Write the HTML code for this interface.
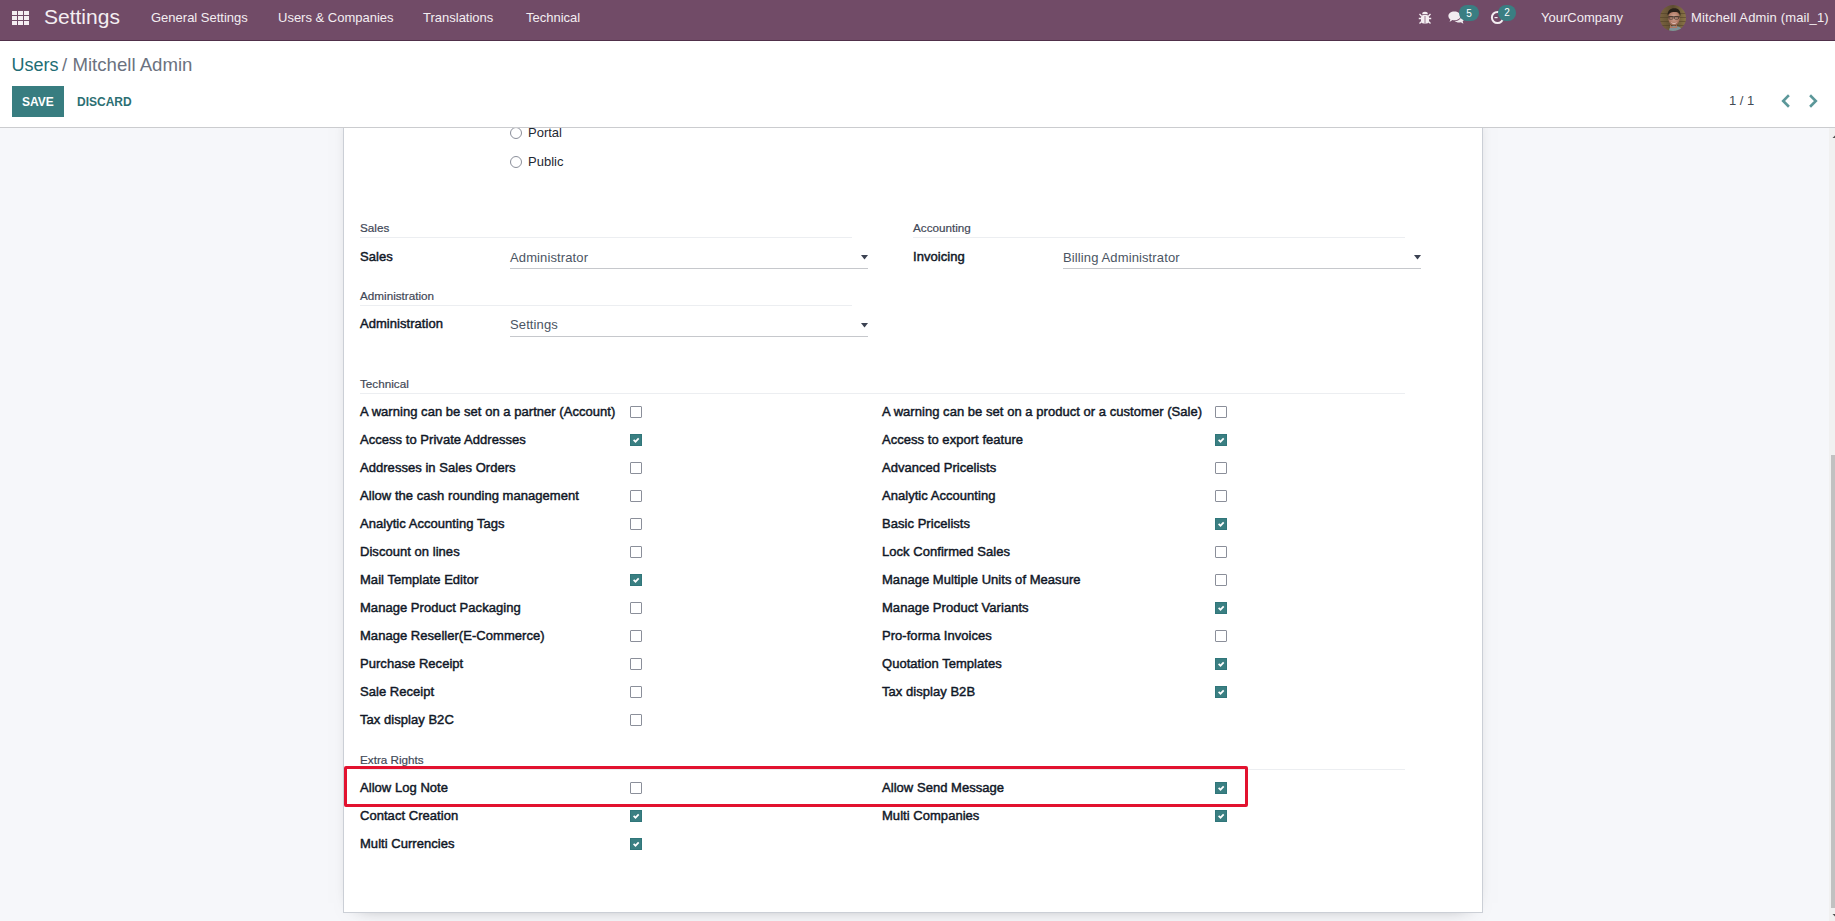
<!DOCTYPE html>
<html><head><meta charset="utf-8">
<style>
*{margin:0;padding:0;box-sizing:border-box}
html,body{width:1835px;height:921px;overflow:hidden;background:#f6f7fa;font-family:"Liberation Sans",sans-serif}
.a{position:absolute;white-space:nowrap}
#nav{position:absolute;left:0;top:0;width:1835px;height:41px;background:#714b67;border-bottom:1px solid #50304a;z-index:5}
.nt{position:absolute;color:#f4eef2;font-size:13px;line-height:16px;top:10px}
#cp{position:absolute;left:0;top:41px;width:1835px;height:87px;background:#fff;border-bottom:1px solid #cbcccf;z-index:4}
#sheet{position:absolute;left:343px;top:100px;width:1140px;height:813px;background:#fff;border:1px solid #cbcfd6;box-shadow:0 5px 20px -15px rgba(0,0,0,.6)}
.lbl{font-size:13px;font-weight:normal;color:#111827;letter-spacing:0.04px;line-height:16px;-webkit-text-stroke:0.45px #111827}
.hd{font-size:11.7px;color:#3f4857;line-height:14px;-webkit-text-stroke:0.2px #3f4857}
.sep{position:absolute;height:1px;background:#eceef1}
.cb{position:absolute;width:12px;height:12px;border:1px solid #8b8f9a;border-radius:1px;background:#fff}
.cb.on{background:#3a7f82;border-color:#30767a;border-radius:0}
.sel{position:absolute;height:1px;background:#c6c8cc}
.st{font-size:13px;color:#4b5563;line-height:16px;letter-spacing:0.12px}
.caret{position:absolute}
.rad{position:absolute;width:12px;height:12px;border:1px solid #8b8f9a;border-radius:50%;background:#fff}
.txt{font-size:13px;color:#1f2933;line-height:16px}
#sbt{position:absolute;left:1829px;top:128px;width:6px;height:793px;background:#f1f1f1}
#sbth{position:absolute;left:1831px;top:455px;width:4px;height:453px;background:#c1c1c1}
.badge{position:absolute;height:16px;background:#3a7e82;border-radius:8px;color:#fff;font-size:10px;line-height:16px;text-align:center}
</style></head><body>
<div id="sheet"></div>
<div class="rad" style="left:510px;top:127px"></div>
<div class="a txt" style="left:528px;top:125px">Portal</div>
<div class="rad" style="left:510px;top:156px"></div>
<div class="a txt" style="left:528px;top:154px">Public</div>

<div class="a hd" style="left:360px;top:221px">Sales</div>
<div class="sep" style="left:360px;top:237px;width:492px"></div>
<div class="a lbl" style="left:360px;top:249px">Sales</div>
<div class="a st" style="left:510px;top:250px">Administrator</div>
<div class="sel" style="left:510px;top:268px;width:358px"></div>
<svg class="caret" style="left:861px;top:255px" width="7" height="5"><path d="M0 0 L7 0 L3.5 4.5 Z" fill="#3b4252"/></svg>

<div class="a hd" style="left:913px;top:221px">Accounting</div>
<div class="sep" style="left:913px;top:237px;width:492px"></div>
<div class="a lbl" style="left:913px;top:249px">Invoicing</div>
<div class="a st" style="left:1063px;top:250px">Billing Administrator</div>
<div class="sel" style="left:1063px;top:268px;width:358px"></div>
<svg class="caret" style="left:1414px;top:255px" width="7" height="5"><path d="M0 0 L7 0 L3.5 4.5 Z" fill="#3b4252"/></svg>

<div class="a hd" style="left:360px;top:289px">Administration</div>
<div class="sep" style="left:360px;top:305px;width:492px"></div>
<div class="a lbl" style="left:360px;top:316px">Administration</div>
<div class="a st" style="left:510px;top:317px">Settings</div>
<div class="sel" style="left:510px;top:336px;width:358px"></div>
<svg class="caret" style="left:861px;top:323px" width="7" height="5"><path d="M0 0 L7 0 L3.5 4.5 Z" fill="#3b4252"/></svg>

<div class="a hd" style="left:360px;top:377px">Technical</div>
<div class="sep" style="left:360px;top:393px;width:1045px"></div>

<div class="a hd" style="left:360px;top:753px">Extra Rights</div>
<div class="sep" style="left:360px;top:769px;width:1045px"></div>
<div class="a lbl" style="left:360px;top:404px">A warning can be set on a partner (Account)</div>
<div class="cb" style="left:630px;top:406px"></div>
<div class="a lbl" style="left:360px;top:432px">Access to Private Addresses</div>
<div class="cb on" style="left:630px;top:434px"><svg width="12" height="12" style="position:absolute;left:-1px;top:-1px"><path d="M3.6 5.9 L5.5 7.7 L8.7 4.3" stroke="#fff" stroke-width="1.7" fill="none"/></svg></div>
<div class="a lbl" style="left:360px;top:460px">Addresses in Sales Orders</div>
<div class="cb" style="left:630px;top:462px"></div>
<div class="a lbl" style="left:360px;top:488px">Allow the cash rounding management</div>
<div class="cb" style="left:630px;top:490px"></div>
<div class="a lbl" style="left:360px;top:516px">Analytic Accounting Tags</div>
<div class="cb" style="left:630px;top:518px"></div>
<div class="a lbl" style="left:360px;top:544px">Discount on lines</div>
<div class="cb" style="left:630px;top:546px"></div>
<div class="a lbl" style="left:360px;top:572px">Mail Template Editor</div>
<div class="cb on" style="left:630px;top:574px"><svg width="12" height="12" style="position:absolute;left:-1px;top:-1px"><path d="M3.6 5.9 L5.5 7.7 L8.7 4.3" stroke="#fff" stroke-width="1.7" fill="none"/></svg></div>
<div class="a lbl" style="left:360px;top:600px">Manage Product Packaging</div>
<div class="cb" style="left:630px;top:602px"></div>
<div class="a lbl" style="left:360px;top:628px">Manage Reseller(E-Commerce)</div>
<div class="cb" style="left:630px;top:630px"></div>
<div class="a lbl" style="left:360px;top:656px">Purchase Receipt</div>
<div class="cb" style="left:630px;top:658px"></div>
<div class="a lbl" style="left:360px;top:684px">Sale Receipt</div>
<div class="cb" style="left:630px;top:686px"></div>
<div class="a lbl" style="left:360px;top:712px">Tax display B2C</div>
<div class="cb" style="left:630px;top:714px"></div>
<div class="a lbl" style="left:882px;top:404px">A warning can be set on a product or a customer (Sale)</div>
<div class="cb" style="left:1215px;top:406px"></div>
<div class="a lbl" style="left:882px;top:432px">Access to export feature</div>
<div class="cb on" style="left:1215px;top:434px"><svg width="12" height="12" style="position:absolute;left:-1px;top:-1px"><path d="M3.6 5.9 L5.5 7.7 L8.7 4.3" stroke="#fff" stroke-width="1.7" fill="none"/></svg></div>
<div class="a lbl" style="left:882px;top:460px">Advanced Pricelists</div>
<div class="cb" style="left:1215px;top:462px"></div>
<div class="a lbl" style="left:882px;top:488px">Analytic Accounting</div>
<div class="cb" style="left:1215px;top:490px"></div>
<div class="a lbl" style="left:882px;top:516px">Basic Pricelists</div>
<div class="cb on" style="left:1215px;top:518px"><svg width="12" height="12" style="position:absolute;left:-1px;top:-1px"><path d="M3.6 5.9 L5.5 7.7 L8.7 4.3" stroke="#fff" stroke-width="1.7" fill="none"/></svg></div>
<div class="a lbl" style="left:882px;top:544px">Lock Confirmed Sales</div>
<div class="cb" style="left:1215px;top:546px"></div>
<div class="a lbl" style="left:882px;top:572px">Manage Multiple Units of Measure</div>
<div class="cb" style="left:1215px;top:574px"></div>
<div class="a lbl" style="left:882px;top:600px">Manage Product Variants</div>
<div class="cb on" style="left:1215px;top:602px"><svg width="12" height="12" style="position:absolute;left:-1px;top:-1px"><path d="M3.6 5.9 L5.5 7.7 L8.7 4.3" stroke="#fff" stroke-width="1.7" fill="none"/></svg></div>
<div class="a lbl" style="left:882px;top:628px">Pro-forma Invoices</div>
<div class="cb" style="left:1215px;top:630px"></div>
<div class="a lbl" style="left:882px;top:656px">Quotation Templates</div>
<div class="cb on" style="left:1215px;top:658px"><svg width="12" height="12" style="position:absolute;left:-1px;top:-1px"><path d="M3.6 5.9 L5.5 7.7 L8.7 4.3" stroke="#fff" stroke-width="1.7" fill="none"/></svg></div>
<div class="a lbl" style="left:882px;top:684px">Tax display B2B</div>
<div class="cb on" style="left:1215px;top:686px"><svg width="12" height="12" style="position:absolute;left:-1px;top:-1px"><path d="M3.6 5.9 L5.5 7.7 L8.7 4.3" stroke="#fff" stroke-width="1.7" fill="none"/></svg></div>
<div class="a lbl" style="left:360px;top:780px">Allow Log Note</div>
<div class="cb" style="left:630px;top:782px"></div>
<div class="a lbl" style="left:360px;top:808px">Contact Creation</div>
<div class="cb on" style="left:630px;top:810px"><svg width="12" height="12" style="position:absolute;left:-1px;top:-1px"><path d="M3.6 5.9 L5.5 7.7 L8.7 4.3" stroke="#fff" stroke-width="1.7" fill="none"/></svg></div>
<div class="a lbl" style="left:360px;top:836px">Multi Currencies</div>
<div class="cb on" style="left:630px;top:838px"><svg width="12" height="12" style="position:absolute;left:-1px;top:-1px"><path d="M3.6 5.9 L5.5 7.7 L8.7 4.3" stroke="#fff" stroke-width="1.7" fill="none"/></svg></div>
<div class="a lbl" style="left:882px;top:780px">Allow Send Message</div>
<div class="cb on" style="left:1215px;top:782px"><svg width="12" height="12" style="position:absolute;left:-1px;top:-1px"><path d="M3.6 5.9 L5.5 7.7 L8.7 4.3" stroke="#fff" stroke-width="1.7" fill="none"/></svg></div>
<div class="a lbl" style="left:882px;top:808px">Multi Companies</div>
<div class="cb on" style="left:1215px;top:810px"><svg width="12" height="12" style="position:absolute;left:-1px;top:-1px"><path d="M3.6 5.9 L5.5 7.7 L8.7 4.3" stroke="#fff" stroke-width="1.7" fill="none"/></svg></div>
<div class="a" style="left:344px;top:766px;width:904px;height:41px;border:3px solid #e2122f;border-radius:2px"></div>
<div id="sbt"></div>
<div id="sbth"></div>
<svg style="position:absolute;left:1829px;top:128px" width="6" height="793"><path d="M6 135.5 L3.5 138 L6 138 Z" transform="translate(0,-128)" fill="#505050"/><path d="M3.5 914 L6 916.5 L6 914 Z" transform="translate(0,-128)" fill="#505050"/></svg>

<div id="nav">
  <svg style="position:absolute;left:12px;top:11px" width="17" height="15" viewBox="0 0 17 15">
    <g fill="#f4eef2">
      <rect x="0" y="0" width="5" height="4"/><rect x="6" y="0" width="5" height="4"/><rect x="12" y="0" width="5" height="4"/>
      <rect x="0" y="5" width="5" height="4"/><rect x="6" y="5" width="5" height="4"/><rect x="12" y="5" width="5" height="4"/>
      <rect x="0" y="10" width="5" height="4"/><rect x="6" y="10" width="5" height="4"/><rect x="12" y="10" width="5" height="4"/>
    </g>
  </svg>
  <div class="a nt" style="left:44px;top:5px;font-size:21px;line-height:24px">Settings</div>
  <div class="a nt" style="left:151px">General Settings</div>
  <div class="a nt" style="left:278px">Users &amp; Companies</div>
  <div class="a nt" style="left:423px">Translations</div>
  <div class="a nt" style="left:526px">Technical</div>
  <!-- bug -->
  <svg style="position:absolute;left:1418px;top:11px" width="14" height="14" viewBox="0 0 14 14">
    <g fill="#f4eef2" stroke="#f4eef2">
      <path d="M4.2 3.2 A2.8 2.4 0 0 1 9.8 3.2 Z" stroke="none"/>
      <rect x="3" y="4" width="8" height="8.5" rx="2.5" stroke="none"/>
      <path d="M1.5 3 L3.6 5.2 M12.5 3 L10.4 5.2 M0.8 7.5 L3 7.5 M13.2 7.5 L11 7.5 M1.5 12.5 L3.5 10.5 M12.5 12.5 L10.5 10.5" stroke-width="1.3" fill="none"/>
    </g>
    <rect x="6.5" y="5" width="1" height="7" fill="#9a7a90"/>
  </svg>
  <!-- chat -->
  <svg style="position:absolute;left:1448px;top:11px" width="17" height="14" viewBox="0 0 17 14">
    <path d="M6.3 0.6 C9.8 0.6 12.4 2.6 12.4 5.0 C12.4 7.4 9.8 9.3 6.3 9.3 C5.6 9.3 5.0 9.2 4.4 9.1 L1.6 11.0 L2.4 8.4 C1.2 7.6 0.4 6.4 0.4 5.0 C0.4 2.6 2.9 0.6 6.3 0.6 Z" fill="#f1ecf0"/>
    <path d="M13.2 4.4 C15.2 5.1 16.2 6.3 16.2 7.7 C16.2 8.8 15.6 9.7 14.7 10.3 L15.4 12.8 L12.8 11.3 C12.2 11.4 11.7 11.5 11.2 11.5 C9.2 11.5 7.5 10.9 6.6 10.0 C10.5 10.0 13.5 7.8 13.2 4.4 Z" fill="#f1ecf0"/>
  </svg>
  <div class="badge" style="left:1459px;top:5px;width:20px;line-height:18px">5</div>
  <!-- activity clock -->
  <svg style="position:absolute;left:1490px;top:10px" width="16" height="16" viewBox="0 0 16 16">
    <circle cx="7.5" cy="7.5" r="5.6" fill="none" stroke="#f4eef2" stroke-width="2"/>
    <path d="M4.5 7.6 L7.6 7.6" stroke="#f4eef2" stroke-width="1.2"/>
  </svg>
  <div class="badge" style="left:1498px;top:5px;width:18px;line-height:16px">2</div>
  <div class="a nt" style="left:1541px">YourCompany</div>
  <!-- avatar -->
  <svg style="position:absolute;left:1660px;top:5px" width="26" height="26" viewBox="0 0 26 26">
    <defs><clipPath id="cc"><circle cx="13" cy="13" r="13"/></clipPath>
    <linearGradient id="bgw" x1="0" y1="0" x2="1" y2="0"><stop offset="0" stop-color="#7a6440"/><stop offset="0.5" stop-color="#5e4c32"/><stop offset="1" stop-color="#8c7748"/></linearGradient>
    <radialGradient id="face" cx="0.5" cy="0.45" r="0.6"><stop offset="0" stop-color="#d4a898"/><stop offset="0.7" stop-color="#b07a66"/><stop offset="1" stop-color="#7c5240"/></radialGradient></defs>
    <g clip-path="url(#cc)">
      <rect width="26" height="26" fill="url(#bgw)"/>
      <g stroke="#4a3a22" stroke-width="0.8" opacity="0.6">
        <path d="M0 8.5 H26 M0 12.5 H26 M0 16.5 H26 M0 20.5 H26"/>
      </g>
      <path d="M9 27 C9 22 11 21 14 21 C18 21 22 22 23 27 Z" fill="#7f9298"/>
      <path d="M10 19 C11 23 16 23 17 19 L17 23 L10 23 Z" fill="#b07a64"/>
      <ellipse cx="14" cy="13.2" rx="5.8" ry="7.6" fill="url(#face)"/>
      <path d="M7.6 10.5 C7.4 5.5 10.5 3.2 14.2 3.2 C18.5 3.2 21 5.8 20.4 11 C19.6 8.5 18.8 7.6 17.5 7.2 C15 6.6 11.5 6.8 9.5 8.2 C8.7 8.8 8.2 9.6 7.6 10.5 Z" fill="#2a201a"/>
      <path d="M8.2 11.8 H19.8" stroke="#3e3028" stroke-width="0.9"/>
      <rect x="9" y="11.6" width="4" height="2.6" rx="0.8" fill="none" stroke="#3a302a" stroke-width="0.7"/>
      <rect x="14.5" y="11.6" width="4" height="2.6" rx="0.8" fill="none" stroke="#3a302a" stroke-width="0.7"/>
      <path d="M11.5 17.6 C12.8 19 15.2 19 16.4 17.6" stroke="#e0c4bc" stroke-width="0.9" fill="none"/>
    </g>
  </svg>
  <div class="a nt" style="left:1691px;letter-spacing:0.15px">Mitchell Admin (mail_1)</div>
</div>
<div id="cp">
  <div class="a" style="left:11.5px;top:13px;font-size:18px;line-height:22px;color:#216d74">Users</div>
  <div class="a" style="left:62px;top:13px;font-size:18.4px;line-height:22px;color:#6b7280">/</div>
  <div class="a" style="left:72.5px;top:13px;font-size:18.6px;line-height:22px;color:#6b7280">Mitchell Admin</div>
  <div class="a" style="left:12px;top:45px;width:52px;height:31px;background:#387d80"></div>
  <div class="a" style="left:22px;top:53px;font-size:12px;font-weight:bold;color:#fff;line-height:16px">SAVE</div>
  <div class="a" style="left:77px;top:53px;font-size:12px;font-weight:bold;color:#2c6f73;line-height:16px">DISCARD</div>
  <div class="a" style="left:1729px;top:52px;font-size:13px;color:#434a55;line-height:16px">1 / 1</div>
  <svg style="position:absolute;left:1778px;top:50px" width="44" height="20" viewBox="0 0 44 20">
    <path d="M10 5.2 L5.2 10 L10 14.8" stroke="#5b9799" stroke-width="2.6" fill="none" stroke-linecap="square"/>
    <path d="M33 5.2 L37.8 10 L33 14.8" stroke="#5b9799" stroke-width="2.6" fill="none" stroke-linecap="square"/>
  </svg>
</div>
</body></html>
